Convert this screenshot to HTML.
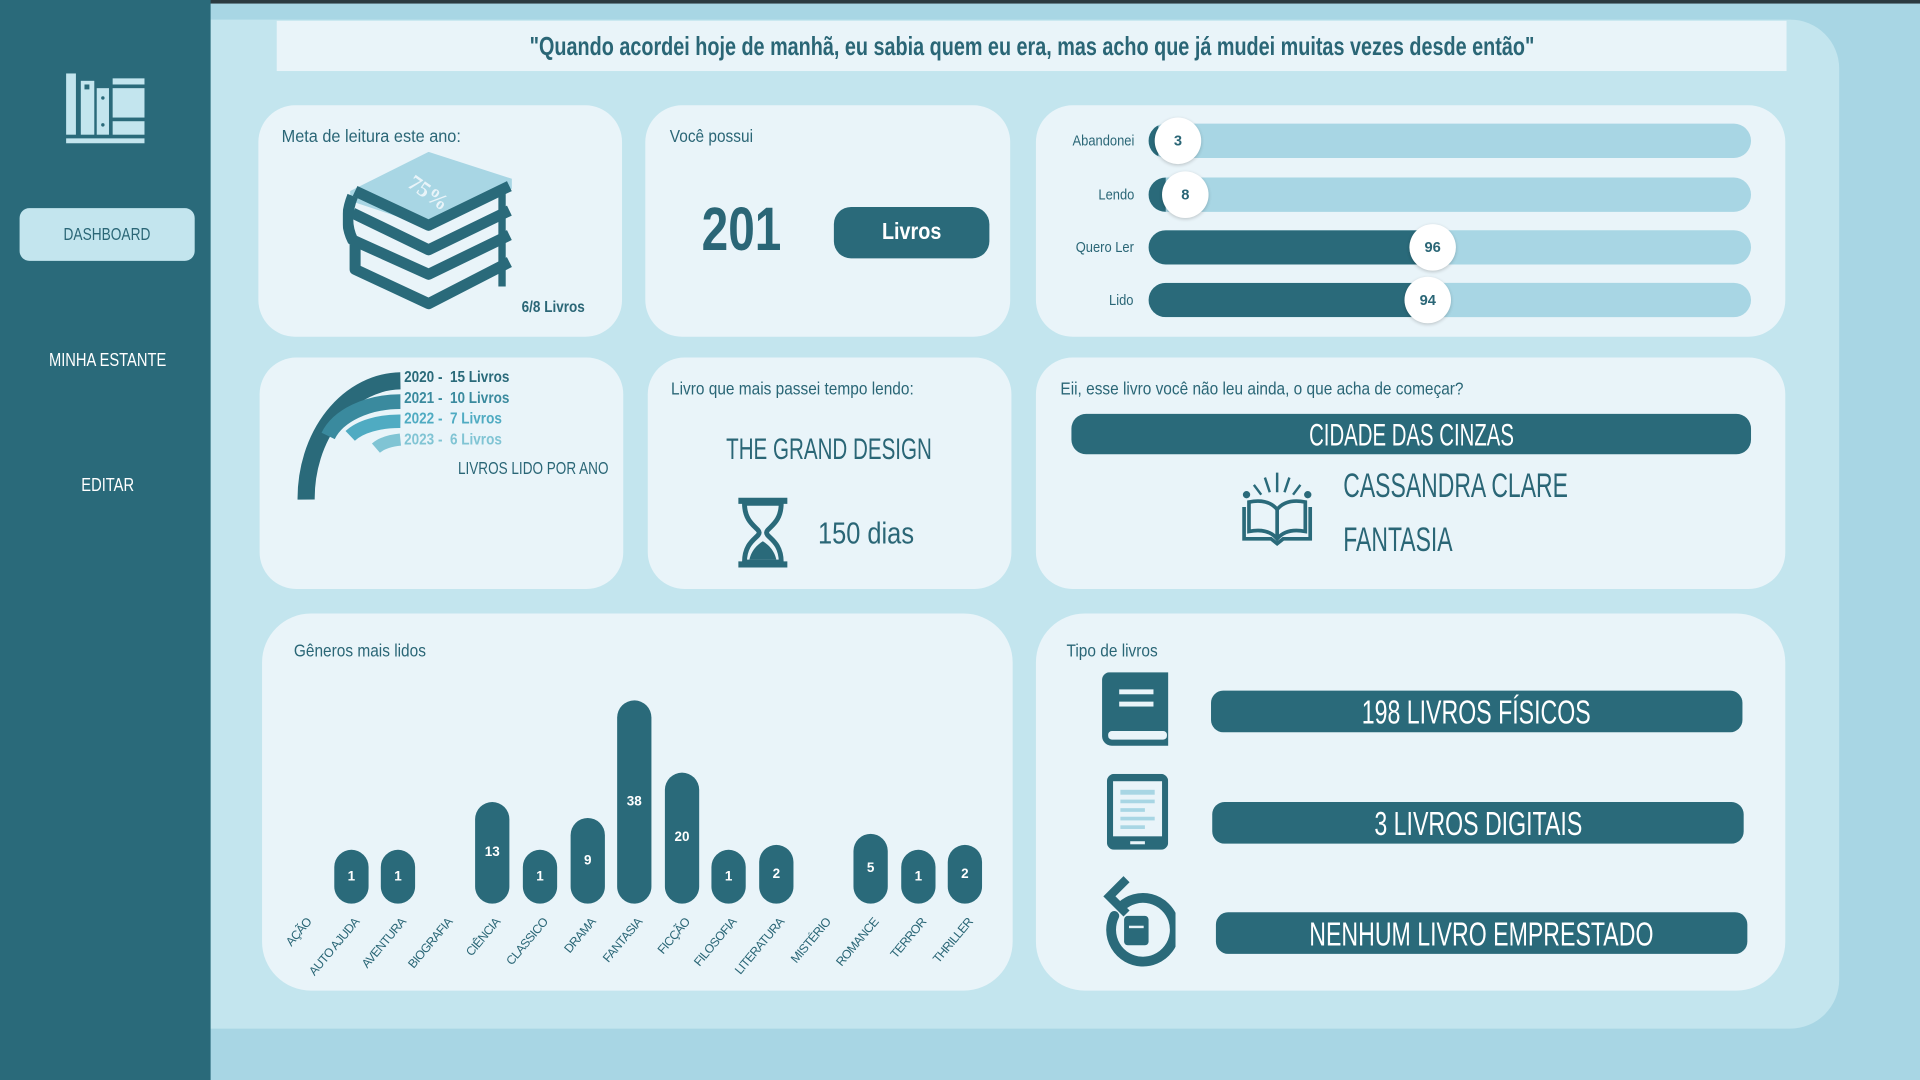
<!DOCTYPE html>
<html><head><meta charset="utf-8">
<style>
*{margin:0;padding:0;box-sizing:border-box}
html,body{width:1920px;height:1080px;overflow:hidden;background:#a8d6e4}
#w{position:absolute;left:0;top:0;width:1568px;height:882px;transform:scale(1.22449);transform-origin:0 0;font-family:"Liberation Sans Narrow","Liberation Sans",sans-serif;color:#2a6676}
.a{position:absolute}
.card{position:absolute;background:#e9f4f9;border-radius:30px}
.dk{background:#2a6a7a;color:#fff}
.t{font-size:14px;color:#2a6676}
.pill{position:absolute;background:#2a6a7a;color:#fff;text-align:center;font-weight:bold}
.bar{position:absolute;width:28px;border-radius:14px;background:#2a6a7a;color:#fff;font-size:11px;font-weight:bold;text-align:center}
.lb{position:absolute;font-size:10px;color:#2a6676;transform:rotate(-50deg);transform-origin:right center;white-space:nowrap;text-align:right;width:80px;letter-spacing:-.5px}
.n{display:inline-block;white-space:nowrap;transform-origin:left center}
.nc{display:inline-block;white-space:nowrap;transform-origin:center center}
</style></head><body>
<div id="w">
<div class="a" style="left:0;top:0;width:1568px;height:3px;background:#2b3a40"></div>
<div class="a" style="left:172px;top:3px;width:1396px;height:879px;background:#a8d6e4"></div>
<div class="a" style="left:172px;top:16px;width:1330px;height:824px;background:#c3e5ee;border-radius:0 40px 40px 0"></div>
<div class="a dk" style="left:0;top:0;width:172px;height:882px"></div>
<svg class="a" style="left:52px;top:58px" width="68" height="60" viewBox="0 0 68 60" fill="#c3e5ee">
<rect x="2" y="2" width="8" height="50"/><rect x="14" y="8" width="11" height="44"/><rect x="27" y="14" width="10" height="38"/><rect x="40" y="6" width="26" height="5"/><rect x="40" y="14" width="26" height="24"/><rect x="40" y="41" width="26" height="11"/><rect x="2" y="55" width="64" height="4"/>
<rect x="17" y="11" width="4" height="4" fill="#2a6a7a"/><circle cx="32" cy="22" r="1.4" fill="#2a6a7a"/><circle cx="32" cy="44" r="1.4" fill="#2a6a7a"/></svg>
<div class="a" style="left:16px;top:170px;width:143px;height:43px;background:#c3e5ee;border-radius:8px;color:#2a6676;font-size:14px;text-align:center;line-height:43px"><span class="nc" style="transform:scaleX(.8)">DASHBOARD</span></div>
<div class="a" style="left:0;top:286px;width:175px;text-align:center;color:#fff;font-size:15px"><span class="nc" style="transform:scaleX(.8)">MINHA ESTANTE</span></div>
<div class="a" style="left:0;top:388px;width:175px;text-align:center;color:#fff;font-size:15px"><span class="nc" style="transform:scaleX(.8)">EDITAR</span></div>
<div class="a" style="left:226px;top:17px;width:1233px;height:41px;background:#e9f4f9;text-align:center;line-height:44px;font-size:21px;font-weight:bold;color:#2a6676"><span class="nc" style="transform:scaleX(.77)">"Quando acordei hoje de manhã, eu sabia quem eu era, mas acho que já mudei muitas vezes desde então"</span></div>
<!-- card1 -->
<div class="card" style="left:211px;top:86px;width:297px;height:189px"></div>
<div class="a t" style="left:230px;top:103px"><span class="n" style="transform:scaleX(.95)">Meta de leitura este ano:</span></div>
<svg class="a" style="left:280px;top:124px" width="140" height="130" viewBox="0 0 140 130">
<polygon points="6,32 70,0 138,22 138,30 72,62 6,40" fill="#a8d6e4"/>
<text x="55" y="32" fill="#e9f4f9" font-size="18" font-weight="bold" font-family="Liberation Sans Narrow" transform="rotate(35 60 25)">75%</text>
<g fill="none" stroke="#2a6a7a" stroke-width="9" stroke-linejoin="round">
<path d="M10 32 L70 60 L136 28"/><path d="M8 50 L70 80 L136 48"/><path d="M8 36 Q0 56 8 72 L70 100 L136 68"/><path d="M10 76 L10 96 L70 124 L136 90"/>
</g>
<path d="M130 30 L130 110" stroke="#2a6a7a" stroke-width="6"/>
</svg>
<div class="a" style="left:426px;top:243px;font-size:13px;font-weight:bold"><span class="n" style="transform:scaleX(.85)">6/8 Livros</span></div>
<!-- card2 -->
<div class="card" style="left:527px;top:86px;width:298px;height:189px"></div>
<div class="a t" style="left:547px;top:103px"><span class="n" style="transform:scaleX(.9)">Você possui</span></div>
<div class="a" style="left:573px;top:158px;font-size:50px;font-weight:bold;color:#2a6676"><span class="n" style="transform:scaleX(.78)">201</span></div>
<div class="pill" style="left:681px;top:169px;width:127px;height:42px;border-radius:14px;line-height:42px;font-size:19px"><span class="nc" style="transform:scaleX(.85)">Livros</span></div>
<!-- card3 -->
<div class="card" style="left:846px;top:86px;width:612px;height:189px"></div>
<div class="a" style="left:860px;top:108px;width:66px;text-align:right;font-size:12px"><span class="n" style="transform:scaleX(.88);transform-origin:right center">Abandonei</span></div>
<div class="a" style="left:860px;top:152px;width:66px;text-align:right;font-size:12px"><span class="n" style="transform:scaleX(.88);transform-origin:right center">Lendo</span></div>
<div class="a" style="left:860px;top:195px;width:66px;text-align:right;font-size:12px"><span class="n" style="transform:scaleX(.88);transform-origin:right center">Quero Ler</span></div>
<div class="a" style="left:860px;top:238px;width:66px;text-align:right;font-size:12px"><span class="n" style="transform:scaleX(.88);transform-origin:right center">Lido</span></div>
<div class="a" style="left:938px;top:101px;width:492px;height:28px;border-radius:14px;background:#a8d6e4;overflow:hidden"><div style="width:8px;height:28px;background:#2a6a7a"></div></div>
<div class="a" style="left:938px;top:145px;width:492px;height:28px;border-radius:14px;background:#a8d6e4;overflow:hidden"><div style="width:14px;height:28px;background:#2a6a7a"></div></div>
<div class="a" style="left:938px;top:188px;width:492px;height:28px;border-radius:14px;background:#a8d6e4;overflow:hidden"><div style="width:232px;height:28px;background:#2a6a7a"></div></div>
<div class="a" style="left:938px;top:231px;width:492px;height:28px;border-radius:14px;background:#a8d6e4;overflow:hidden"><div style="width:228px;height:28px;background:#2a6a7a"></div></div>
<div class="a" style="left:943px;top:96px;width:38px;height:38px;border-radius:50%;background:#fff;text-align:center;line-height:38px;font-size:12px;font-weight:bold;box-shadow:0 1px 3px rgba(0,0,0,.2)">3</div>
<div class="a" style="left:949px;top:140px;width:38px;height:38px;border-radius:50%;background:#fff;text-align:center;line-height:38px;font-size:12px;font-weight:bold;box-shadow:0 1px 3px rgba(0,0,0,.2)">8</div>
<div class="a" style="left:1151px;top:183px;width:38px;height:38px;border-radius:50%;background:#fff;text-align:center;line-height:38px;font-size:12px;font-weight:bold;box-shadow:0 1px 3px rgba(0,0,0,.2)">96</div>
<div class="a" style="left:1147px;top:226px;width:38px;height:38px;border-radius:50%;background:#fff;text-align:center;line-height:38px;font-size:12px;font-weight:bold;box-shadow:0 1px 3px rgba(0,0,0,.2)">94</div>
<!-- card4 -->
<div class="card" style="left:212px;top:292px;width:297px;height:189px"></div>
<svg class="a" style="left:230px;top:295px" width="110" height="120" viewBox="230 295 110 120" fill="none">
<path d="M250 408 A78 96 0 0 1 327 311" stroke="#2a6a7a" stroke-width="14"/>
<path d="M268 356 A62 40 0 0 1 327 328" stroke="#3a8a9e" stroke-width="12"/>
<path d="M286 356 A45 22 0 0 1 327 344" stroke="#4fabc2" stroke-width="11"/>
<path d="M307 366 A30 14 0 0 1 327 359" stroke="#80c4d4" stroke-width="10"/>
</svg>
<div class="a" style="left:330px;top:299px;font-size:13px;font-weight:bold;color:#2a6a7a;line-height:17px"><span class="n" style="transform:scaleX(.85)">2020 -&nbsp; 15 Livros<br><span style="color:#3a8a9e">2021 -&nbsp; 10 Livros</span><br><span style="color:#4fabc2">2022 -&nbsp; 7 Livros</span><br><span style="color:#80c4d4">2023 -&nbsp; 6 Livros</span></span></div>
<div class="a" style="left:374px;top:374px;font-size:14px;color:#2a6676"><span class="n" style="transform:scaleX(.79)">LIVROS LIDO POR ANO</span></div>
<!-- card5 -->
<div class="card" style="left:529px;top:292px;width:297px;height:189px"></div>
<div class="a t" style="left:548px;top:309px"><span class="n" style="transform:scaleX(.9)">Livro que mais passei tempo lendo:</span></div>
<div class="a" style="left:529px;top:354px;width:297px;text-align:center;font-size:24px;color:#2a6676"><span class="nc" style="transform:scaleX(.7)">THE GRAND DESIGN</span></div>
<svg class="a" style="left:600px;top:406px" width="46" height="58" viewBox="0 0 46 58"><path d="M3 3 H43 M3 55 H43" stroke="#2a6a7a" stroke-width="5"/><path d="M8 5 C8 22 20 25 20 29 C20 33 8 36 8 53 H38 C38 36 26 33 26 29 C26 25 38 22 38 5 Z" fill="none" stroke="#2a6a7a" stroke-width="4"/><path d="M12 51 C14 42 20 38 23 36 C26 38 32 42 34 51 Z" fill="#2a6a7a"/></svg>
<div class="a" style="left:668px;top:422px;font-size:25px;color:#2a6676"><span class="n" style="transform:scaleX(.83)">150 dias</span></div>
<!-- card6 -->
<div class="card" style="left:846px;top:292px;width:612px;height:189px"></div>
<div class="a t" style="left:866px;top:309px"><span class="n" style="transform:scaleX(.9)">Eii, esse livro você não leu ainda, o que acha de começar?</span></div>
<div class="pill" style="left:875px;top:338px;width:555px;height:33px;border-radius:12px;line-height:34px;font-size:26px;font-weight:normal"><span class="nc" style="transform:scaleX(.64)">CIDADE DAS CINZAS</span></div>
<svg class="a" style="left:1010px;top:382px" width="66" height="66" viewBox="0 0 66 66" stroke="#2a6a7a" fill="none" stroke-width="3">
<path d="M6 32 V58 H28 L33 62 L38 58 H60 V32"/><path d="M10 28 V52 C20 50 28 52 33 58 C38 52 46 50 56 52 V28 C46 26 38 28 33 34 C28 28 20 26 10 28 Z"/><path d="M33 34 V58"/>
<path d="M33 4 V20 M23 8 L27 20 M43 8 L39 20 M14 14 L20 22 M52 14 L46 22" stroke-width="2"/><circle cx="8" cy="22" r="1.5" fill="#2a6a7a"/><circle cx="58" cy="22" r="1.5" fill="#2a6a7a"/></svg>
<div class="a" style="left:1097px;top:381px;font-size:28px;color:#2a6676"><span class="n" style="transform:scaleX(.67)">CASSANDRA CLARE</span></div>
<div class="a" style="left:1097px;top:425px;font-size:28px;color:#2a6676"><span class="n" style="transform:scaleX(.67)">FANTASIA</span></div>
<!-- card7 -->
<div class="card" style="left:214px;top:501px;width:613px;height:308px;border-radius:40px"></div>
<div class="a t" style="left:240px;top:523px"><span class="n" style="transform:scaleX(.9)">Gêneros mais lidos</span></div>
<div class="bar" style="left:273px;top:694px;height:44px;line-height:44px">1</div>
<div class="bar" style="left:311px;top:694px;height:44px;line-height:44px">1</div>
<div class="bar" style="left:388px;top:655px;height:83px;line-height:83px">13</div>
<div class="bar" style="left:427px;top:694px;height:44px;line-height:44px">1</div>
<div class="bar" style="left:466px;top:668px;height:70px;line-height:70px">9</div>
<div class="bar" style="left:504px;top:572px;height:166px;line-height:166px">38</div>
<div class="bar" style="left:543px;top:631px;height:107px;line-height:107px">20</div>
<div class="bar" style="left:581px;top:694px;height:44px;line-height:44px">1</div>
<div class="bar" style="left:620px;top:690px;height:48px;line-height:48px">2</div>
<div class="bar" style="left:697px;top:681px;height:57px;line-height:57px">5</div>
<div class="bar" style="left:736px;top:694px;height:44px;line-height:44px">1</div>
<div class="bar" style="left:774px;top:690px;height:48px;line-height:48px">2</div>
<div class="lb" style="left:173px;top:746px">AÇÃO</div>
<div class="lb" style="left:212px;top:746px">AUTO AJUDA</div>
<div class="lb" style="left:250px;top:746px">AVENTURA</div>
<div class="lb" style="left:288px;top:746px">BIOGRAFIA</div>
<div class="lb" style="left:327px;top:746px">CIÊNCIA</div>
<div class="lb" style="left:366px;top:746px">CLASSICO</div>
<div class="lb" style="left:405px;top:746px">DRAMA</div>
<div class="lb" style="left:443px;top:746px">FANTASIA</div>
<div class="lb" style="left:482px;top:746px">FICÇÃO</div>
<div class="lb" style="left:520px;top:746px">FILOSOFIA</div>
<div class="lb" style="left:559px;top:746px">LITERATURA</div>
<div class="lb" style="left:597px;top:746px">MISTÉRIO</div>
<div class="lb" style="left:636px;top:746px">ROMANCE</div>
<div class="lb" style="left:675px;top:746px">TERROR</div>
<div class="lb" style="left:713px;top:746px">THRILLER</div>
<!-- card8 -->
<div class="card" style="left:846px;top:501px;width:612px;height:308px;border-radius:40px"></div>
<div class="a t" style="left:871px;top:523px"><span class="n" style="transform:scaleX(.9)">Tipo de livros</span></div>
<svg class="a" style="left:900px;top:549px" width="56" height="62" viewBox="0 0 56 62"><path d="M6 0 H54 V60 H8 C3 60 0 56 0 52 V6 C0 3 3 0 6 0 Z" fill="#2a6a7a"/><rect x="5" y="48" width="48" height="7" rx="3" fill="#e9f4f9"/><rect x="14" y="14" width="28" height="4" fill="#e9f4f9"/><rect x="14" y="24" width="28" height="4" fill="#e9f4f9"/></svg>
<svg class="a" style="left:904px;top:632px" width="50" height="62" viewBox="0 0 50 62"><rect x="0" y="0" width="50" height="62" rx="6" fill="#2a6a7a"/><rect x="5" y="6" width="40" height="45" fill="#e9f4f9"/><g fill="#a8d6e4"><rect x="11" y="13" width="28" height="4"/><rect x="11" y="21" width="28" height="3"/><rect x="11" y="28" width="20" height="3"/><rect x="11" y="35" width="28" height="3"/><rect x="11" y="42" width="20" height="3"/></g><rect x="19" y="55" width="12" height="2.5" fill="#e9f4f9"/></svg>
<svg class="a" style="left:896px;top:712px" width="64" height="78" viewBox="0 0 64 78"><path d="M14 36 A26 26 0 1 0 20 28" fill="none" stroke="#2a6a7a" stroke-width="8" stroke-linecap="round"/><path d="M24 6 L10 20 L24 34" fill="none" stroke="#2a6a7a" stroke-width="7"/><rect x="22" y="36" width="20" height="24" rx="3" fill="#2a6a7a"/><rect x="26" y="44" width="12" height="2" fill="#e9f4f9"/></svg>
<div class="pill" style="left:989px;top:564px;width:434px;height:34px;border-radius:10px;line-height:36px;font-size:27px;font-weight:normal"><span class="nc" style="transform:scaleX(.7)">198 LIVROS FÍSICOS</span></div>
<div class="pill" style="left:990px;top:655px;width:434px;height:34px;border-radius:10px;line-height:36px;font-size:27px;font-weight:normal"><span class="nc" style="transform:scaleX(.7)">3 LIVROS DIGITAIS</span></div>
<div class="pill" style="left:993px;top:745px;width:434px;height:34px;border-radius:10px;line-height:36px;font-size:27px;font-weight:normal"><span class="nc" style="transform:scaleX(.7)">NENHUM LIVRO EMPRESTADO</span></div>
</div>
</body></html>
